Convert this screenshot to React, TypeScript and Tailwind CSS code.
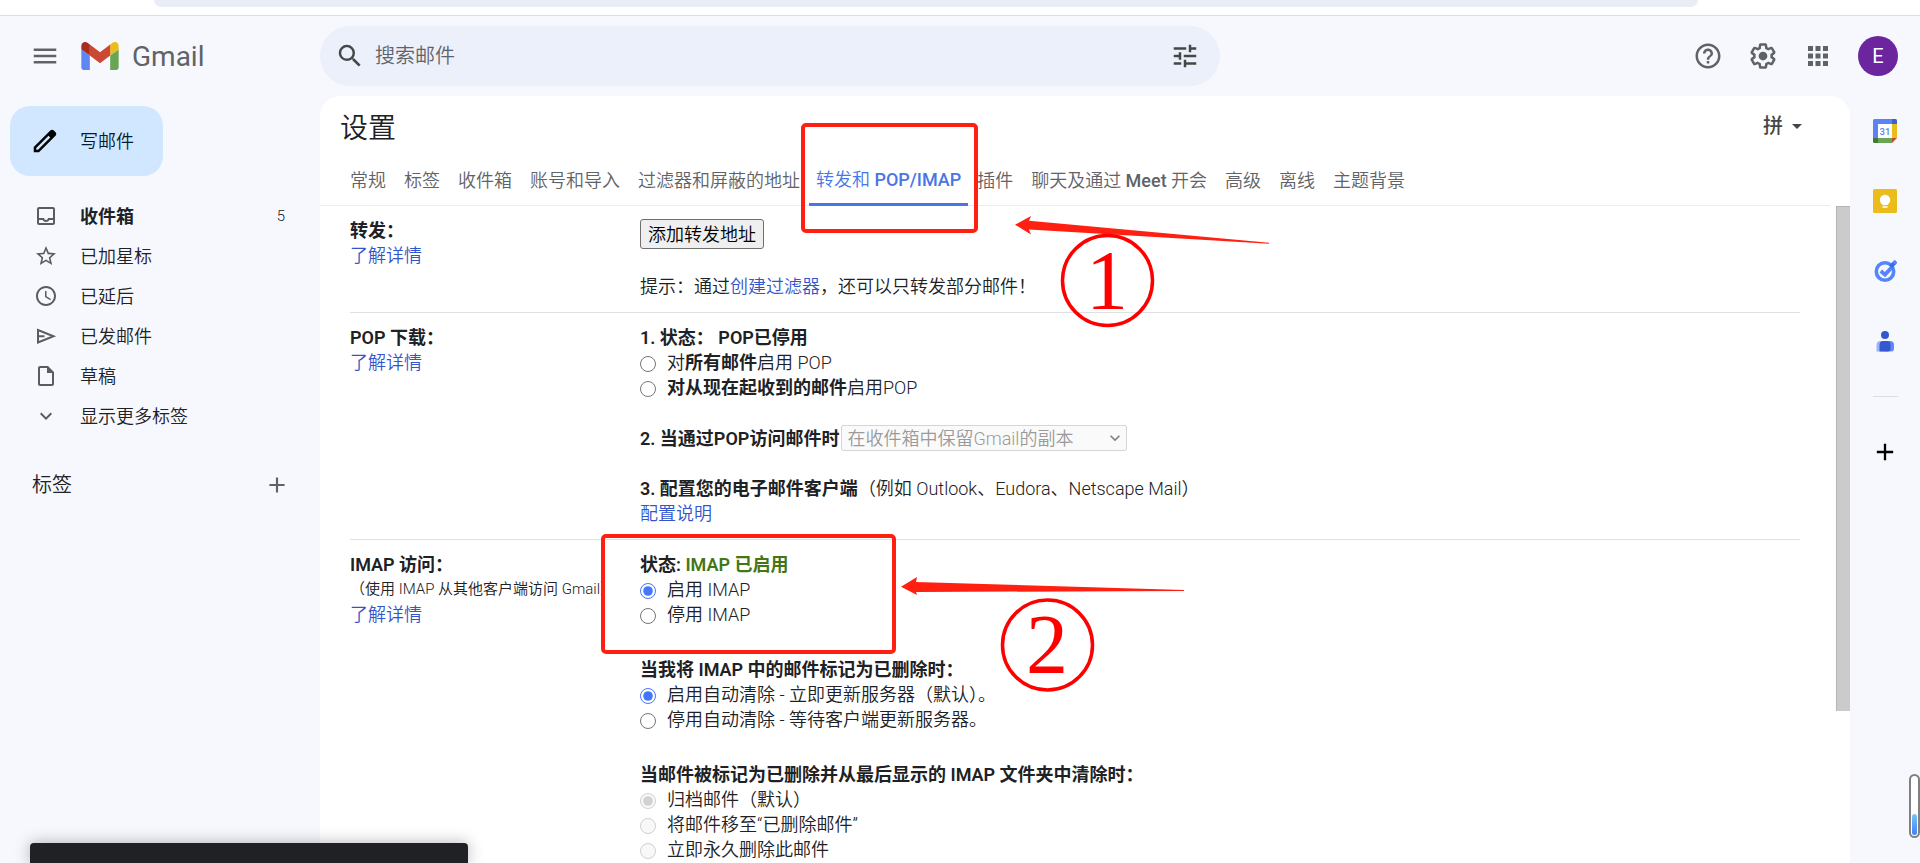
import type { ReactNode } from "react";
import {
  MdAdd,
  MdApps,
  MdArrowDropDown,
  MdExpandMore,
  MdHelpOutline,
  MdKeyboardArrowDown,
  MdMenu,
  MdOutlineInbox,
  MdOutlineInsertDriveFile,
  MdOutlineSchedule,
  MdSearch,
  MdStarBorder,
  MdTune,
} from "react-icons/md";

function GmailMark() {
  return (
    <svg viewBox="52 42 88 66" className="h-7 w-[38px]" aria-hidden="true">
      <path fill="#6086f6" d="M58 108h14V74L52 59v43c0 3.32 2.69 6 6 6" />
      <path fill="#68a555" d="M120 108h14c3.32 0 6-2.69 6-6V59l-20 15" />
      <path fill="#eabd1c" d="M120 48v26l20-15v-8c0-7.42-8.47-11.65-14.4-7.2" />
      <path fill="#cb4932" d="M72 74V48l24 18 24-18v26L96 92" />
      <path fill="#a92a1e" d="M52 51v8l20 15V48l-5.6-4.2c-5.94-4.45-14.4-.22-14.4 7.2" />
    </svg>
  );
}

function GearIcon() {
  return (
    <svg viewBox="0 0 24 24" className="size-[30px]" fill="currentColor" aria-hidden="true">
      <path d="M13.85 22.25h-3.7c-.74 0-1.36-.54-1.45-1.27l-.27-1.89c-.27-.14-.53-.29-.79-.46l-1.8.72c-.7.26-1.47-.03-1.81-.65L2.2 15.53c-.35-.66-.2-1.44.36-1.88l1.53-1.19c-.01-.15-.02-.3-.02-.46 0-.15.01-.31.02-.46l-1.52-1.19c-.59-.45-.74-1.26-.37-1.88l1.85-3.19c.34-.62 1.11-.9 1.79-.63l1.81.73c.26-.17.52-.32.78-.46l.27-1.91c.09-.7.71-1.25 1.44-1.25h3.7c.74 0 1.36.54 1.45 1.27l.27 1.89c.27.14.53.29.79.46l1.8-.72c.71-.26 1.48.03 1.82.65l1.84 3.18c.36.66.2 1.44-.36 1.88l-1.52 1.19c.01.15.02.3.02.46s-.01.31-.02.46l1.52 1.19c.56.45.72 1.23.37 1.86l-1.86 3.22c-.34.62-1.11.9-1.8.63l-1.8-.72c-.26.17-.52.32-.78.46l-.27 1.91c-.1.68-.72 1.22-1.46 1.22zm-3.23-2h2.76l.37-2.55.53-.22c.44-.18.88-.44 1.34-.78l.45-.34 2.38.96 1.38-2.4-2.03-1.58.07-.56c.03-.26.06-.51.06-.78s-.03-.53-.06-.78l-.07-.56 2.03-1.58-1.39-2.4-2.39.96-.45-.35c-.42-.32-.87-.58-1.33-.77l-.52-.22-.37-2.55h-2.76l-.37 2.55-.53.21c-.44.19-.88.44-1.34.79l-.45.33-2.38-.95-1.39 2.39 2.03 1.58-.07.56a7 7 0 0 0-.06.79c0 .26.02.53.06.78l.07.56-2.03 1.58 1.38 2.4 2.39-.96.45.35c.43.33.86.58 1.33.77l.53.22.38 2.55z" />
      <circle cx="12" cy="12" r="3.5" />
    </svg>
  );
}

function PencilIcon() {
  return (
    <svg viewBox="0 0 24 24" className="size-[30px] text-black" fill="currentColor" aria-hidden="true">
      <path d="M20.41 4.94l-1.35-1.35c-.78-.78-2.05-.78-2.83 0L3 16.82V21h4.18L20.41 7.77c.79-.78.79-2.05 0-2.83zm-14 14.12L5 19v-1.36l9.82-9.82 1.41 1.41-9.82 9.83z" />
    </svg>
  );
}

function SendIcon() {
  return (
    <svg viewBox="0 0 24 24" className="size-6" fill="none" stroke="currentColor" strokeWidth="2" aria-hidden="true">
      <path d="M4 6v12.400L19.500 12.200zM4 12.200h6.500" />
    </svg>
  );
}

function CalendarIcon() {
  return (
    <svg viewBox="0 0 24 24" className="size-6" aria-hidden="true">
      <path fill="#fff" d="M5 5h14v14H5z" />
      <path fill="#5b84f2" d="M1.500 0H19v5H5v14H0V1.500A1.500 1.500 0 0 1 1.500 0z" />
      <path fill="#3a62cc" d="M19 0h3.500A1.500 1.500 0 0 1 24 1.500V5h-5z" />
      <path fill="#eabd1c" d="M19 5h5v14h-5z" />
      <path fill="#68a555" d="M5 19h14v5H5z" />
      <path fill="#3f7a35" d="M0 19h5v5H1.500A1.500 1.500 0 0 1 0 22.500z" />
      <path fill="#cb4932" d="M19 19h5l-5 5z" />
      <text x="12" y="15.500" textAnchor="middle" fontSize="9.500" fontFamily="Roboto, sans-serif" fontWeight="500" fill="#5b84f2">
        31
      </text>
    </svg>
  );
}

function KeepIcon() {
  return (
    <svg viewBox="0 0 24 24" className="size-6" aria-hidden="true">
      <rect width="24" height="24" rx="1.500" fill="#eabd1c" />
      <circle cx="12" cy="11" r="5.200" fill="#fff" />
      <path fill="#fff" d="M9.500 13h5v3h-5zM9.500 17.200h5v1.600h-5z" />
    </svg>
  );
}

function TasksIcon() {
  return (
    <svg viewBox="0 0 24 24" className="size-6" aria-hidden="true">
      <circle cx="12" cy="12.500" r="8.700" fill="none" stroke="#5485fb" strokeWidth="3.600" />
      <path d="M7.800 12l4.200 3.600 7.500-8" fill="none" stroke="#5485fb" strokeWidth="3.800" />
      <path d="M17.500 7.800l4-4" stroke="#3d6be0" strokeWidth="4" />
      <path d="M20.800 4.600l2.400-2.400" stroke="#5485fb" strokeWidth="4" />
    </svg>
  );
}

function ContactsIcon() {
  return (
    <svg viewBox="0 0 24 24" className="size-6" aria-hidden="true">
      <circle cx="12" cy="6" r="4" fill="#3459cf" />
      <path fill="#9db4fb" d="M7 12h5v10.500H3.500V16A4 4 0 0 1 7 12z" />
      <path fill="#5f86fb" d="M12 12h5a4 4 0 0 1 4 4v3.500a3 3 0 0 1-3 3h-6z" />
      <path fill="#3459cf" d="M10.500 12h3.500a3.500 3.500 0 0 1 3.500 3.500v4a3 3 0 0 1-3 3H6.500V16a4 4 0 0 1 4-4z" />
    </svg>
  );
}

const folders = [
  { label: "收件箱", icon: <MdOutlineInbox size={24} />, count: 5 },
  { label: "已加星标", icon: <MdStarBorder size={24} /> },
  { label: "已延后", icon: <MdOutlineSchedule size={24} /> },
  { label: "已发邮件", icon: <SendIcon /> },
  { label: "草稿", icon: <MdOutlineInsertDriveFile size={24} /> },
  { label: "显示更多标签", icon: <MdExpandMore size={24} /> },
];

const tabs: { id: string; label: ReactNode; active?: boolean }[] = [
  { id: "general", label: "常规" },
  { id: "labels", label: "标签" },
  { id: "inbox", label: "收件箱" },
  { id: "accounts", label: "账号和导入" },
  { id: "filters", label: "过滤器和屏蔽的地址" },
  { id: "forwarding", label: <>转发和 <span className="font-medium">POP/IMAP</span></>, active: true },
  { id: "addons", label: "插件" },
  { id: "chat", label: <>聊天及通过 <span className="font-medium">Meet</span> 开会</> },
  { id: "advanced", label: "高级" },
  { id: "offline", label: "离线" },
  { id: "themes", label: "主题背景" },
];

function Option(props: { name: string; checked?: boolean; disabled?: boolean; children: ReactNode }) {
  return (
    <label className="flex w-fit items-center gap-[11px]">
      <input
        type="radio"
        name={props.name}
        defaultChecked={props.checked}
        disabled={props.disabled}
        className="mt-0.5 size-4 accent-[#4475ff]"
      />
      <span>{props.children}</span>
    </label>
  );
}

function Section(props: { title: string; note?: string; children: ReactNode }) {
  return (
    <section className="mr-9 ml-[30px] flex border-b border-[#dfe0e1] pt-3 pb-[13px]">
      <div className="w-[290px] shrink-0">
        <h2 className="font-semibold">{props.title}</h2>
        {props.note && <p className="text-[15px] leading-[25px] whitespace-nowrap">{props.note}</p>}
        <a href="#help" className="text-[#3355cc]">
          了解详情
        </a>
      </div>
      <div className="min-w-0 flex-1">{props.children}</div>
    </section>
  );
}

function Annotations() {
  return (
    <svg className="pointer-events-none absolute top-0 left-0 h-[863px] w-[1920px]" aria-hidden="true">
      <g fill="none" stroke="#ff2012" strokeWidth="4">
        <rect x="803" y="125" width="173" height="106" rx="3" />
        <rect x="603" y="536" width="291" height="116" rx="3" />
      </g>
      <g fill="#ff2012">
        <path d="M1015 224.700L1031 216l-2 4.700L1269 242.700v1L1029 229.500l2 5z" />
        <path d="M901 586.700L917 577l-1 5L1184 590v1L916 592l1 3z" />
      </g>
      <g fill="none" stroke="#f00" strokeWidth="3.500">
        <circle cx="1107.500" cy="280.500" r="45" />
        <circle cx="1047.500" cy="645" r="45" />
      </g>
      <g fill="#f00" fontFamily="'Liberation Serif', serif" fontSize="84" fontWeight="400" textAnchor="middle">
        <text x="1107" y="309">1</text>
        <text x="1047" y="673">2</text>
      </g>
    </svg>
  );
}

export default function App() {
  return (
    <div className="relative flex h-screen flex-col overflow-hidden bg-[#f7f8fd] font-[Roboto,'Noto_Sans_CJK_SC',sans-serif] text-[18px] leading-[25px] font-[350] text-[#202124]">
      <div className="h-4 shrink-0 border-b border-[#dddee0] bg-white pr-[222px] pl-[154px]">
        <div className="h-[7px] rounded-b-2xl bg-[#e9edf6]" />
      </div>

      <header className="flex h-20 shrink-0 items-center pr-[22px]">
        <div className="flex w-80 shrink-0 items-center pl-[30px]">
          <button aria-label="主菜单" className="text-[#5f6368]">
            <MdMenu size={30} />
          </button>
          <a href="#inbox" className="ml-[21px] flex items-center gap-[13px]">
            <GmailMark />
            <span className="text-[28px] font-normal text-[#5f6368]">Gmail</span>
          </a>
        </div>
        <form className="flex h-[60px] w-[900px] items-center rounded-full bg-[#ecf0fb] pr-5 pl-[15px]">
          <MdSearch size={30} className="text-[#444746]" />
          <input
            aria-label="搜索邮件"
            placeholder="搜索邮件"
            className="ml-[10px] flex-1 bg-transparent text-xl outline-none placeholder:text-[#5f6368]"
          />
          <button type="button" aria-label="搜索选项" className="text-[#444746]">
            <MdTune size={30} />
          </button>
        </form>
        <div className="ml-auto flex items-center gap-[25px] text-[#5f6368]">
          <button aria-label="支持">
            <MdHelpOutline size={30} />
          </button>
          <button aria-label="设置">
            <GearIcon />
          </button>
          <button aria-label="Google 应用">
            <MdApps size={30} />
          </button>
          <button className="size-10 rounded-full bg-[#6a259f] text-xl font-normal text-white">E</button>
        </div>
      </header>

      <div className="flex min-h-0 flex-1">
        <nav className="w-80 shrink-0 pt-[10px]">
          <button className="ml-[10px] flex h-[70px] w-[153px] items-center gap-5 rounded-[20px] bg-[#d0e7ff] pl-5 text-[#001d35]">
            <PencilIcon />
            写邮件
          </button>
          <ul className="mt-5">
            {folders.map((f) => (
              <li key={f.label}>
                <a
                  href="#folder"
                  className={
                    f.count ? "flex h-10 items-center pr-[35px] font-semibold" : "flex h-10 items-center pr-[35px]"
                  }
                >
                  <span className="ml-[30px] flex w-[50px] pl-1 text-[#5a5d60]">{f.icon}</span>
                  {f.label}
                  {f.count && <span className="ml-auto text-[15px] font-[350]">{f.count}</span>}
                </a>
              </li>
            ))}
          </ul>
          <div className="mt-[29px] flex h-10 items-center justify-between pr-[30px] pl-8 text-xl">
            <h2>标签</h2>
            <button aria-label="创建新标签" className="text-[#5f6368]">
              <MdAdd size={26} />
            </button>
          </div>
        </nav>

        <main className="flex min-w-0 flex-1 flex-col overflow-hidden rounded-t-[20px] bg-white">
          <div className="flex h-[60px] shrink-0 items-center justify-between pr-[41px] pl-5">
            <h1 className="pt-1 text-[28px]">设置</h1>
            <button aria-label="输入工具" className="flex items-center gap-0.5 text-xl font-medium text-[#444746]">
              拼
              <MdArrowDropDown size={24} />
            </button>
          </div>
          <div role="tablist" className="mr-5 flex h-[50px] shrink-0 border-b border-[#ebecee] pl-[21px]">
            {tabs.map((t) => (
              <button
                key={t.id}
                role="tab"
                aria-selected={!!t.active}
                className={
                  t.active
                    ? "-mb-px border-b-3 border-[#4a75e6] px-[7px] whitespace-nowrap text-[#4a75e6]"
                    : "px-[9px] whitespace-nowrap text-[#5f6368]"
                }
              >
                {t.label}
              </button>
            ))}
          </div>

          <div className="flex min-h-0 flex-1">
            <div className="min-w-0 flex-1 overflow-hidden">
              <Section title="转发：">
                <button className="mt-px h-[30px] rounded-[3px] border border-[#6f6f6f] bg-[#efefef] px-[7px] text-black">
                  添加转发地址
                </button>
                <p className="mt-[25px]">
                  提示：通过
                  <a href="#filters" className="text-[#3355cc]">
                    创建过滤器
                  </a>
                  ，还可以只转发部分邮件！
                </p>
              </Section>

              <Section title="POP 下载：">
                <p className="font-semibold">1. 状态： POP已停用</p>
                <Option name="pop">
                  对<b className="font-semibold">所有邮件</b>启用 POP
                </Option>
                <Option name="pop">
                  <b className="font-semibold">对从现在起收到的邮件</b>启用POP
                </Option>
                <div className="mt-[25px] flex items-center gap-0.5">
                  <label htmlFor="pop-action" className="font-semibold">
                    2. 当通过POP访问邮件时
                  </label>
                  <div className="relative">
                    <select
                      id="pop-action"
                      disabled
                      className="block h-[26px] w-[286px] appearance-none rounded-xs border border-[#d5d5d5] bg-[#fafafa] pl-[5px] text-[#9a9a9a]"
                    >
                      <option>在收件箱中保留Gmail的副本</option>
                    </select>
                    <MdKeyboardArrowDown size={20} className="absolute top-[3px] right-0.5 text-[#808080]" />
                  </div>
                </div>
                <p className="mt-[25px]">
                  <b className="font-semibold">3. 配置您的电子邮件客户端</b>（例如 Outlook、Eudora、Netscape Mail）
                </p>
                <a href="#config" className="text-[#3355cc]">
                  配置说明
                </a>
              </Section>

              <Section title="IMAP 访问：" note="（使用 IMAP 从其他客户端访问 Gmail）">
                <p className="font-semibold">
                  状态: <span className="text-[#447711]">IMAP 已启用</span>
                </p>
                <Option name="imap" checked>
                  启用 IMAP
                </Option>
                <Option name="imap">停用 IMAP</Option>
                <p className="mt-[30px] font-semibold">当我将 IMAP 中的邮件标记为已删除时：</p>
                <Option name="expunge" checked>
                  启用自动清除 - 立即更新服务器（默认）。
                </Option>
                <Option name="expunge">停用自动清除 - 等待客户端更新服务器。</Option>
                <p className="mt-[30px] font-semibold">当邮件被标记为已删除并从最后显示的 IMAP 文件夹中清除时：</p>
                <Option name="deleted" checked disabled>
                  归档邮件（默认）
                </Option>
                <Option name="deleted" disabled>
                  将邮件移至“已删除邮件”
                </Option>
                <Option name="deleted" disabled>
                  立即永久删除此邮件
                </Option>
              </Section>
            </div>
            <div className="h-[505px] w-[14px] shrink-0 border-t border-l border-[#b5b5b5] bg-[#cbcbcb]" />
          </div>
        </main>

        <aside className="flex w-[70px] shrink-0 flex-col items-center gap-[46px] pt-[23px]">
          <button aria-label="日历">
            <CalendarIcon />
          </button>
          <button aria-label="Keep">
            <KeepIcon />
          </button>
          <button aria-label="Tasks">
            <TasksIcon />
          </button>
          <button aria-label="通讯录">
            <ContactsIcon />
          </button>
          <hr className="-mt-[3px] w-[25px] border-[#dcdde0]" />
          <button aria-label="获取插件" className="-mt-[5px] text-black">
            <MdAdd size={28} />
          </button>
        </aside>
      </div>

      <div className="absolute bottom-0 left-[30px] h-5 w-[438px] rounded-t bg-[#202124] shadow-[0_0_16px_rgba(0,0,0,0.3)]" />
      <div className="absolute right-0 bottom-[25px] flex h-16 w-[11px] items-end rounded-full border-2 border-[#808080] bg-white p-px">
        <div className="h-[21px] w-full rounded-full bg-linear-to-b from-[#7cc4fa] to-[#3b82f6]" />
      </div>
      <Annotations />
    </div>
  );
}
